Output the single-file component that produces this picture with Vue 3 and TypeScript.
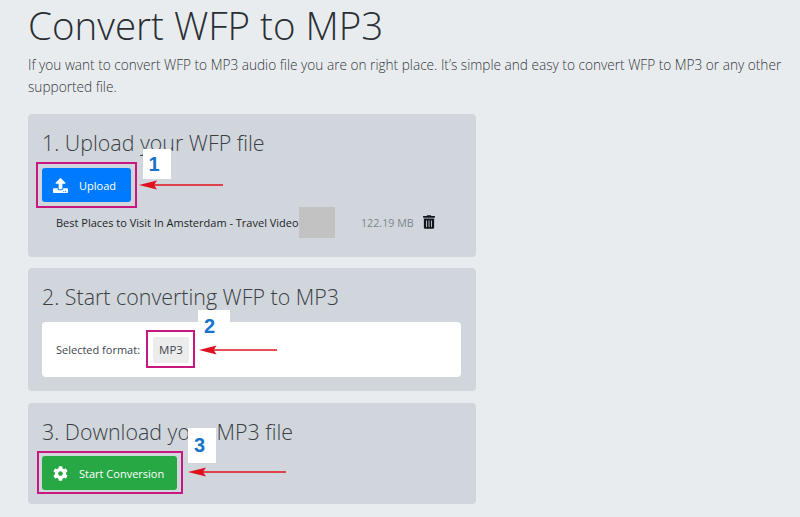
<script setup lang="ts">
const title = 'Convert WFP to MP3'
</script>

<template>
  <main class="page">
    <h1 class="title">{{ title }}</h1>
    <p class="lead">If you want to convert WFP to MP3 audio file you are on right place. It’s simple and easy to convert WFP to MP3 or any other supported file.</p>

    <section class="card first">
      <h2 class="heading">1. Upload your WFP file</h2>
      <button class="btn blue">
        <svg class="btn-icon upload" viewBox="0 0 512 512"><path fill="#fff" d="M296 384h-80c-13.300 0-24-10.700-24-24V192h-87.700c-17.800 0-26.700-21.500-14.100-34.100L242.300 5.700c7.500-7.500 19.800-7.500 27.300 0l152.200 152.200c12.600 12.600 3.700 34.100-14.100 34.100H320v168c0 13.300-10.700 24-24 24zm216-8v112c0 13.300-10.700 24-24 24H24c-13.300 0-24-10.700-24-24V376c0-13.300 10.700-24 24-24h136v8c0 30.900 25.100 56 56 56h80c30.900 0 56-25.100 56-56v-8h136c13.300 0 24 10.700 24 24zm-124 88c0-11-9-20-20-20s-20 9-20 20 9 20 20 20 20-9 20-20zm64 0c0-11-9-20-20-20s-20 9-20 20 9 20 20 20 20-9 20-20z"/></svg>
        <span>Upload</span>
      </button>
      <div class="file-row">
        <span class="file-name">Best Places to Visit In Amsterdam - Travel Video</span>
        <span class="redact"></span>
        <span class="file-size">122.19 MB</span>
        <svg class="trash" viewBox="0 0 448 512"><path fill="#12161c" d="M32 464a48 48 0 0 0 48 48h288a48 48 0 0 0 48-48V128H32zm272-256a16 16 0 0 1 32 0v224a16 16 0 0 1-32 0zm-96 0a16 16 0 0 1 32 0v224a16 16 0 0 1-32 0zm-96 0a16 16 0 0 1 32 0v224a16 16 0 0 1-32 0zM432 32H312l-9.400-18.700A24 24 0 0 0 281.100 0H166.800a23.700 23.700 0 0 0-21.400 13.300L136 32H16A16 16 0 0 0 0 48v32a16 16 0 0 0 16 16h416a16 16 0 0 0 16-16V48a16 16 0 0 0-16-16z"/></svg>
      </div>
      <span class="mark m-upload"></span>
      <span class="num n1">1</span>
      <svg class="arrow a1" viewBox="0 0 84 10"><path d="M84 5H14" stroke="#e0101e" stroke-width="1.600"/><path d="M0 5l18-4.500-3 4.500 3 4.500z" fill="#e0101e"/></svg>
    </section>

    <section class="card second">
      <h2 class="heading">2. Start converting WFP to MP3</h2>
      <div class="panel">
        <span class="format-label">Selected format:</span>
        <span class="format">MP3</span>
      </div>
      <span class="mark m-format"></span>
      <span class="num n2">2</span>
      <svg class="arrow a2" viewBox="0 0 80 10"><path d="M80 5H14" stroke="#e0101e" stroke-width="1.600"/><path d="M0 5l18-4.500-3 4.500 3 4.500z" fill="#e0101e"/></svg>
    </section>

    <section class="card third">
      <h2 class="heading">3. Download your MP3 file</h2>
      <button class="btn green">
        <svg class="btn-icon gear" viewBox="0 0 512 512"><path fill="#fff" d="M487.400 315.700l-42.600-24.600c4.300-23.200 4.300-47 0-70.200l42.600-24.600c4.900-2.800 7.100-8.600 5.500-14-11.100-35.600-30-67.800-54.700-94.600-3.800-4.100-10-5.100-14.800-2.300L380.800 110c-17.900-15.400-38.500-27.300-60.800-35.100V25.800c0-5.600-3.900-10.500-9.400-11.700-36.700-8.200-74.300-7.800-109.200 0-5.500 1.200-9.400 6.100-9.400 11.700V75c-22.200 7.900-42.800 19.800-60.800 35.100L88.700 85.500c-4.900-2.800-11-1.900-14.800 2.300-24.700 26.700-43.600 58.900-54.700 94.600-1.700 5.400.6 11.200 5.500 14L67.300 221c-4.300 23.200-4.300 47 0 70.200l-42.600 24.600c-4.900 2.800-7.100 8.600-5.500 14 11.100 35.600 30 67.800 54.700 94.600 3.800 4.100 10 5.100 14.800 2.300l42.600-24.600c17.900 15.400 38.500 27.300 60.800 35.100v49.200c0 5.600 3.900 10.500 9.400 11.700 36.700 8.200 74.300 7.800 109.200 0 5.500-1.200 9.400-6.100 9.400-11.700v-49.200c22.200-7.900 42.800-19.800 60.800-35.100l42.600 24.600c4.900 2.800 11 1.900 14.800-2.300 24.700-26.700 43.600-58.900 54.700-94.600 1.500-5.500-.7-11.300-5.600-14.100zM256 336c-44.100 0-80-35.900-80-80s35.900-80 80-80 80 35.900 80 80-35.900 80-80 80z"/></svg>
        <span>Start Conversion</span>
      </button>
      <span class="mark m-start"></span>
      <span class="num n3">3</span>
      <svg class="arrow a3" viewBox="0 0 98 10"><path d="M98 5H14" stroke="#e0101e" stroke-width="1.600"/><path d="M0 5l18-4.500-3 4.500 3 4.500z" fill="#e0101e"/></svg>
    </section>
  </main>
</template>

<style>
html, body { margin: 0; background: #e9ecef; }
</style>

<style scoped>
.page {
  box-sizing: border-box;
  width: 800px;
  height: 517px;
  padding: 0 0 0 28px;
  overflow: hidden;
  background: #e9ecef;
  color: #212529;
  font-family: "Open Sans", "Noto Sans", sans-serif;
}
.title {
  margin: 0;
  padding-top: 2px;
  font-size: 38.500px;
  font-weight: 300;
  line-height: 46px;
  color: #2a2f34;
}
.lead {
  width: 770px;
  margin: 6px 0 0;
  font-size: 13.650px;
  font-weight: 300;
  line-height: 22px;
  color: #33383d;
}
.card {
  position: relative;
  box-sizing: border-box;
  width: 448px;
  padding: 13px 14px 0;
  background: #d1d6dc;
  border-radius: 4px;
}
.first { height: 143px; margin-top: 16px; }
.second { height: 123px; margin-top: 11px; }
.third { height: 101px; margin-top: 12px; }
.heading {
  margin: 0;
  font-size: 21.400px;
  font-weight: 300;
  line-height: 32px;
  color: #3a3f44;
}
.btn {
  display: flex;
  align-items: center;
  height: 34px;
  padding: 0;
  border: 0;
  border-radius: 3px;
  color: #fff;
  font-family: inherit;
  font-size: 11px;
}
.blue { width: 89px; background: #007bff; margin-top: 9px; }
.green { width: 135px; background: #28a745; margin-top: 8px; }
.btn-icon { flex: none; width: 15px; height: 15px; margin: 0 11px 0 11px; }
.file-row {
  display: flex;
  align-items: center;
  height: 31px;
  margin: 5px 0 0 14px;
  font-size: 11px;
  color: #212529;
}
.file-name { white-space: nowrap; width: 243px; }
.redact { flex: none; width: 36px; height: 31px; background: #c2c2c2; }
.file-size { margin-left: 26px; font-size: 10.700px; color: #80868c; }
.trash { width: 12px; height: 14px; margin-left: 9px; margin-top: -2px; }
.panel {
  display: flex;
  align-items: center;
  box-sizing: border-box;
  width: 419px;
  height: 55px;
  margin-top: 9px;
  padding-left: 14px;
  background: #fff;
  border-radius: 4px;
  font-size: 11px;
  color: #42474c;
}
.format {
  margin-left: 13px;
  padding: 0 6px;
  line-height: 26px;
  background: #ececec;
  border-radius: 2px;
  font-size: 11.500px;
}
.mark {
  position: absolute;
  box-sizing: border-box;
  border: 2px solid #c8177f;
}
.m-upload { left: 8px; top: 48px; width: 101px; height: 46px; }
.m-format { left: 118px; top: 62px; width: 49px; height: 38px; }
.m-start { left: 9px; top: 48px; width: 146px; height: 43px; }
.num {
  position: absolute;
  box-sizing: border-box;
  display: flex;
  align-items: center;
  justify-content: center;
  background: #fff;
  font-family: "Liberation Sans", sans-serif;
  font-weight: 700;
  font-size: 20px;
  color: #1673c9;
}
.n1 { left: 115px; top: 35px; width: 28px; height: 30px; padding-right: 6px; }
.n2 { left: 170px; top: 42px; width: 32px; height: 32px; padding-right: 9px; }
.n3 { left: 160px; top: 25px; width: 28px; height: 35px; padding-right: 5px; }
.arrow { position: absolute; height: 10px; }
.a1 { left: 111px; top: 66px; width: 84px; }
.a2 { left: 171px; top: 77px; width: 78px; }
.a3 { left: 160px; top: 64px; width: 98px; }
</style>
